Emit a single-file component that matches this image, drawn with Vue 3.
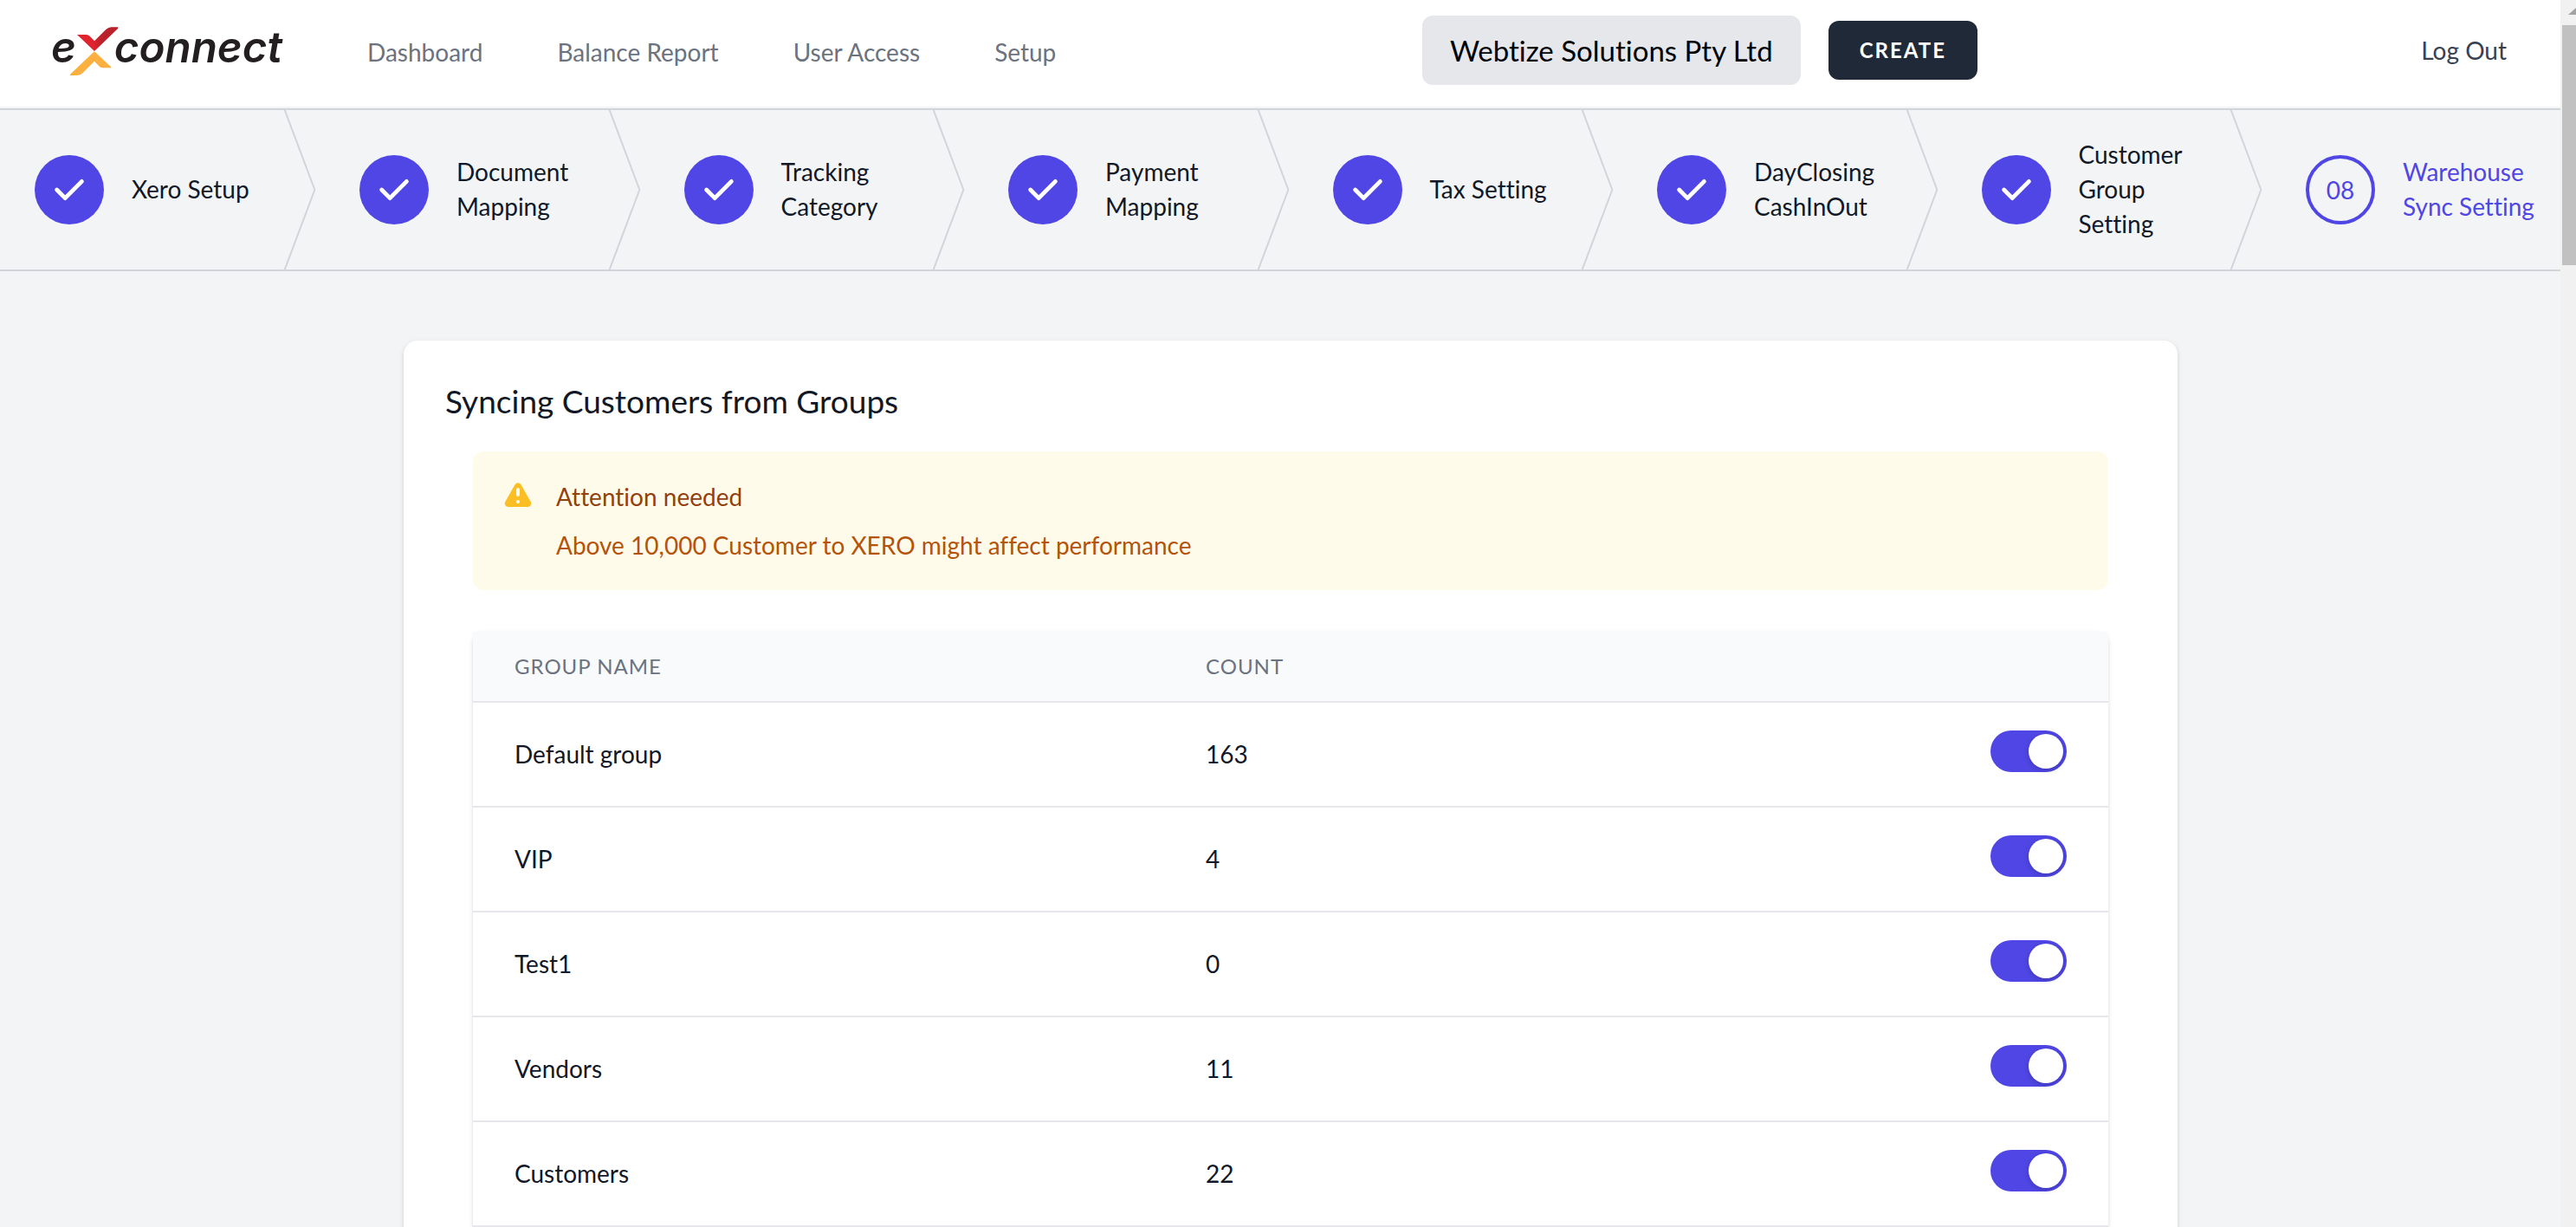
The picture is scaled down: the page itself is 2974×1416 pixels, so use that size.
<script setup>
import { ref } from 'vue'

const links = ['Dashboard', 'Balance Report', 'User Access', 'Setup']

const steps = [
  { name: 'Xero Setup', done: true },
  { name: 'Document Mapping', done: true },
  { name: 'Tracking Category', done: true },
  { name: 'Payment Mapping', done: true },
  { name: 'Tax Setting', done: true },
  { name: 'DayClosing CashInOut', done: true },
  { name: 'Customer Group Setting', done: true },
  { name: 'Warehouse Sync Setting', done: false },
]

const groups = ref([
  { name: 'Default group', count: 163, sync: true },
  { name: 'VIP', count: 4, sync: true },
  { name: 'Test1', count: 0, sync: true },
  { name: 'Vendors', count: 11, sync: true },
  { name: 'Customers', count: 22, sync: true },
])
</script>

<template>
  <div class="app">
    <div class="page">
      <header class="topbar">
        <div class="left">
          <a href="#" class="logo" aria-label="exconnect">
            <svg viewBox="0 0 930 270" width="310" height="90">
              <defs>
                <linearGradient id="red" x1="0" x2="1" y1="0" y2="0">
                  <stop offset="0.4" stop-color="#e0232e" />
                  <stop offset="0.6" stop-color="#b9222a" />
                </linearGradient>
              </defs>
              <text x="57" y="172" class="word">e</text>
              <text x="275" y="172" class="word">connect</text>
              <path fill="url(#red)" d="M147 75H178Q186 75 191 80L207 97L247 57Q256 49 266 49H289V53L207 132Z" />
              <path fill="#fbb040" d="M207 133L266 188V190H236Q228 190 222 183L207 167L167 207Q158 216 148 216H123V212Z" />
            </svg>
          </a>
          <nav class="nav">
            <a v-for="link in links" :key="link" href="#">{{ link }}</a>
          </nav>
        </div>
        <div class="right">
          <div class="account">
            <div class="company">Webtize Solutions Pty Ltd</div>
            <button type="button" class="create">CREATE</button>
          </div>
          <a href="#" class="logout">Log Out</a>
        </div>
      </header>

      <ol class="steps">
        <li v-for="(step, i) in steps" :key="step.name" :class="{ current: !step.done }">
          <a href="#" class="step">
            <span class="badge">
              <svg v-if="step.done" viewBox="0 0 20 20" width="48" height="48" fill="#fff">
                <path fill-rule="evenodd" clip-rule="evenodd" d="M16.707 5.293a1 1 0 010 1.414l-8 8a1 1 0 01-1.414 0l-4-4a1 1 0 011.414-1.414L8 12.586l7.293-7.293a1 1 0 011.414 0z" />
              </svg>
              <template v-else>0{{ i + 1 }}</template>
            </span>
            <span class="label">{{ step.name }}</span>
          </a>
          <svg v-if="i < steps.length - 1" class="chevron" viewBox="0 0 22 80" preserveAspectRatio="none" fill="none">
            <path d="M0 -2L20 40L0 82" stroke="#d1d5db" stroke-width="2" vector-effect="non-scaling-stroke" stroke-linejoin="round" />
          </svg>
        </li>
      </ol>

      <main class="main">
        <section class="card">
          <h1>Syncing Customers from Groups</h1>
          <div class="body">
            <div class="alert" role="alert">
              <svg viewBox="0 0 20 20" width="40" height="40" fill="#fbbf24">
                <path fill-rule="evenodd" clip-rule="evenodd" d="M8.257 3.099c.765-1.36 2.722-1.36 3.486 0l5.58 9.92c.75 1.334-.213 2.98-1.742 2.98H4.42c-1.53 0-2.493-1.646-1.743-2.98l5.58-9.92zM11 13a1 1 0 11-2 0 1 1 0 012 0zm-1-8a1 1 0 00-1 1v3a1 1 0 002 0V6a1 1 0 00-1-1z" />
              </svg>
              <div class="alert-text">
                <h2>Attention needed</h2>
                <p>Above 10,000 Customer to XERO might affect performance</p>
              </div>
            </div>

            <table class="groups">
              <thead>
                <tr>
                  <th scope="col" class="col-name">GROUP NAME</th>
                  <th scope="col">COUNT</th>
                  <th class="col-toggle"></th>
                </tr>
              </thead>
              <tbody>
                <tr v-for="group in groups" :key="group.name">
                  <td>{{ group.name }}</td>
                  <td>{{ group.count }}</td>
                  <td class="toggle-cell">
                    <input v-model="group.sync" type="checkbox" role="switch" class="toggle" :aria-label="group.name" />
                  </td>
                </tr>
              </tbody>
            </table>
          </div>
        </section>
      </main>
    </div>

    <div class="scrollbar" aria-hidden="true">
      <svg viewBox="0 0 18 8" width="18" height="8"><path d="M0 8L9 0L18 8Z" fill="#a3a3a3" /></svg>
      <div class="thumb"></div>
    </div>
  </div>
</template>

<style>
body {
  margin: 0;
  background: #f3f4f6;
}
</style>

<style scoped>
.app {
  display: flex;
  height: 100vh;
  overflow: hidden;
  font-family: Lato, "Open Sans", sans-serif;
  font-size: 28px;
  font-variant-ligatures: none;
  line-height: 40px;
  color: #111827;
  background: #f3f4f6;
}
.app *,
.app {
  box-sizing: border-box;
}
a {
  color: inherit;
  text-decoration: none;
}
.page {
  flex: 1;
  min-width: 0;
}

.topbar {
  display: grid;
  grid-template-columns: 1602fr 1252fr;
  align-items: center;
  height: 125px;
  padding: 0 62px 4px 40px;
  background: #fff;
  border-bottom: 2px solid #f3f4f6;
}
.left,
.right,
.account,
.nav {
  display: flex;
  align-items: center;
}
.right {
  justify-content: space-between;
  padding-bottom: 4px;
}
.logo svg {
  display: block;
}
.word {
  font-family: Inter, "Liberation Sans", sans-serif;
  font-size: 148px;
  font-style: italic;
  font-weight: 600;
  fill: #231f20;
}
.nav {
  gap: 86px;
  margin-left: 74px;
  color: #6b7280;
}
.account {
  gap: 32px;
}
.company {
  padding: 16px 32px;
  font-size: 33px;
  line-height: 48px;
  color: #000;
  background: #e5e7eb;
  border-radius: 12px;
}
.create {
  padding: 18px 36px;
  border: 0;
  border-radius: 12px;
  background: #1f2937;
  color: #fff;
  font-family: inherit;
  font-size: 24px;
  font-weight: 700;
  line-height: 32px;
  letter-spacing: 2px;
}
.logout {
  color: #374151;
}

.steps {
  display: grid;
  grid-template-columns: 734fr repeat(6, 749fr) 684fr;
  margin: 0;
  padding: 0;
  list-style: none;
  border-top: 2px solid #d1d5db;
  border-bottom: 2px solid #d1d5db;
}
.steps li {
  position: relative;
  display: flex;
  align-items: center;
  min-height: 184px;
  padding: 30px 48px;
}
.steps li:first-child {
  padding-left: 40px;
}
.steps li:last-child {
  padding-right: 24px;
}
.step {
  display: flex;
  align-items: center;
  gap: 32px;
}
.label {
  padding-bottom: 2px;
}
.badge {
  display: flex;
  flex: none;
  align-items: center;
  justify-content: center;
  width: 80px;
  height: 80px;
  border-radius: 50%;
  background: #4f46e5;
}
.current {
  color: #4f46e5;
}
.current .badge {
  border: 4px solid #4f46e5;
  background: transparent;
}
.chevron {
  position: absolute;
  top: 0;
  right: 0;
  width: 40px;
  height: 100%;
}

.main {
  padding: 80px 0 80px 24px;
}
.card {
  max-width: 2048px;
  margin: 0 auto;
  padding: 46px 48px;
  background: #fff;
  border-radius: 16px;
  box-shadow: 0 2px 6px rgba(0, 0, 0, 0.1), 0 2px 4px rgba(0, 0, 0, 0.06);
}
h1 {
  margin: 0;
  font-size: 37px;
  font-weight: 400;
  line-height: 48px;
}
.body {
  padding: 34px 32px 0;
}
.alert {
  display: flex;
  gap: 24px;
  padding: 32px;
  border-radius: 12px;
  background: #fffbeb;
}
.alert-text h2 {
  margin: 0;
  font-size: 28px;
  font-weight: 400;
  color: #92400e;
}
.alert-text p {
  margin: 16px 0 0;
  color: #b45309;
}
.groups {
  width: 100%;
  margin-top: 48px;
  table-layout: fixed;
  border-collapse: separate;
  border-spacing: 0;
  border-radius: 12px 12px 0 0;
  box-shadow: 0 2px 6px rgba(0, 0, 0, 0.1), 0 2px 4px rgba(0, 0, 0, 0.06);
}
.groups th {
  height: 82px;
  padding: 0 48px;
  background: #f9fafb;
  border-bottom: 2px solid #e5e7eb;
  font-size: 24px;
  font-weight: 400;
  line-height: 32px;
  letter-spacing: 1px;
  text-align: left;
  color: #6b7280;
}
.col-name {
  width: 798px;
}
.col-toggle {
  width: 240px;
}
.groups td {
  height: 121px;
  padding: 0 48px 2px;
  border-bottom: 2px solid #e5e7eb;
}
.groups .toggle-cell {
  padding-bottom: 8px;
  text-align: right;
}
.toggle {
  appearance: none;
  display: inline-flex;
  width: 88px;
  height: 48px;
  margin: 0;
  padding: 4px;
  border-radius: 24px;
  background: #e5e7eb;
  vertical-align: middle;
}
.toggle::before {
  content: "";
  width: 40px;
  height: 40px;
  border-radius: 50%;
  background: #fff;
  box-shadow: 0 2px 6px rgba(0, 0, 0, 0.2);
}
.toggle:checked {
  justify-content: flex-end;
  background: #4f46e5;
}

.scrollbar {
  flex: none;
  width: 18px;
  padding: 9px 0 0 2px;
  overflow: hidden;
  background: #f1f1f1;
}
.scrollbar svg {
  display: block;
  margin-left: 7px;
}
.thumb {
  height: 277px;
  margin-top: 12px;
  background: #c1c1c1;
}
</style>
